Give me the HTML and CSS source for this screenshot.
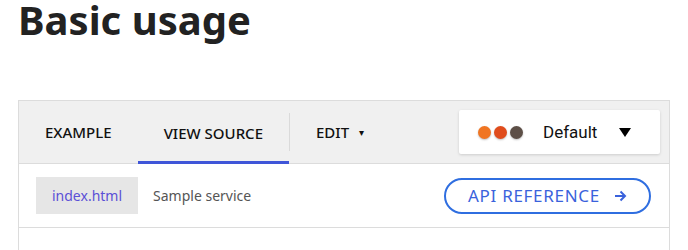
FILE: index.html
```html
<!DOCTYPE html>
<html lang="en">
<head>
    <meta charset="UTF-8">
    <title>Basic usage</title>
    <link rel="stylesheet" href="styles.css">
</head>
<body>
    <h1 class="title">Basic usage</h1>

    <div class="demo">
        <!-- 顶部标签栏 -->
        <div class="tab-bar">
            <div class="tabs">
                <span class="tab">EXAMPLE</span>
                <span class="tab tab-active">VIEW SOURCE</span>
                <span class="divider"></span>
                <span class="tab">EDIT <span class="caret">&#9662;</span></span>
            </div>
            <div class="theme-select">
                <span class="dots">
                    <span class="dot dot-1"></span>
                    <span class="dot dot-2"></span>
                    <span class="dot dot-3"></span>
                </span>
                <span class="theme-name">Default</span>
                <span class="triangle"></span>
            </div>
        </div>

        <!-- 文件栏 -->
        <div class="file-bar">
            <div class="files">
                <span class="file file-active">index.html</span>
                <span class="file">Sample service</span>
            </div>
            <a class="api-btn" href="#">API REFERENCE
                <svg width="13" height="12" viewBox="0 0 13 12"><path d="M1 6h10M6.5 1.5L11 6l-4.5 4.5" fill="none" stroke="currentColor" stroke-width="2"/></svg>
            </a>
        </div>

        <div class="code-area"></div>
    </div>
</body>
</html>
```

FILE: styles.css
```css
/* 全局样式 */
body {
    margin: 0;
    font-family: "Noto Sans", sans-serif;
    color: #1d1d1f;
    background: #ffffff;
}

.title {
    margin: 0 0 0 18px;
    font-size: 40px;
    line-height: 39px;
    font-weight: 700;
    color: #222222;
}

/* 示例容器 */
.demo {
    margin: 61px 0 0 18px;
    width: 650px;
    border: 1px solid #dcdcdc;
    border-bottom: none;
}

/* 标签栏 */
.tab-bar {
    display: flex;
    justify-content: space-between;
    align-items: center;
    height: 62px;
    background: #f0f0f0;
    border-bottom: 1px solid #dcdcdc;
}

.tabs {
    display: flex;
    align-items: center;
    height: 100%;
}

.tab {
    display: flex;
    align-items: center;
    height: 100%;
    padding: 0 26px;
    font-size: 15px;
    font-weight: 500;
    color: #111111;
    box-sizing: border-box;
}

.tab-active {
    box-shadow: inset 0 -3px 0 #3f55d8;
    margin-bottom: -1px;
    height: calc(100% + 1px);
}

.caret {
    font-size: 10px;
    margin-left: 10px;
}

.divider {
    width: 1px;
    height: 38px;
    background: #dadada;
}

/* 主题选择器 */
.theme-select {
    display: flex;
    align-items: center;
    width: 201px;
    height: 44px;
    margin-right: 9px;
    padding-left: 19px;
    box-sizing: border-box;
    background: #ffffff;
    border-radius: 2px;
    box-shadow: 0 1px 3px rgba(0, 0, 0, 0.15);
}

.dots {
    display: flex;
    gap: 3px;
}

.dot {
    width: 13px;
    height: 13px;
    border-radius: 50%;
    box-shadow: 0 1px 2px rgba(0, 0, 0, 0.25);
}

.dot-1 { background: #f07522; }
.dot-2 { background: #e04c1c; }
.dot-3 { background: #5d4f47; }

.theme-name {
    margin-left: 20px;
    font-family: Roboto, sans-serif;
    font-size: 17px;
    color: #111111;
}

.triangle {
    margin-left: 22px;
    border-left: 6px solid transparent;
    border-right: 6px solid transparent;
    border-top: 9px solid #000000;
}

/* 文件栏 */
.file-bar {
    display: flex;
    justify-content: space-between;
    align-items: center;
    height: 63px;
    padding: 0 18px 0 17px;
    border-bottom: 1px solid #dcdcdc;
}

.files {
    display: flex;
    align-items: center;
}

.file {
    padding: 8px 15px;
    font-size: 14px;
    color: #555555;
    line-height: 21px;
}

.file-active {
    padding: 8px 16px;
    background: #e6e6e6;
    color: #5b50d6;
}

.api-btn {
    display: flex;
    align-items: center;
    gap: 14px;
    width: 207px;
    height: 36px;
    box-sizing: border-box;
    padding-left: 22px;
    border: 2px solid #2f6ee0;
    border-radius: 18px;
    font-size: 17px;
    letter-spacing: 0.7px;
    color: #3a62dc;
    text-decoration: none;
}

.code-area {
    height: 40px;
}
```
